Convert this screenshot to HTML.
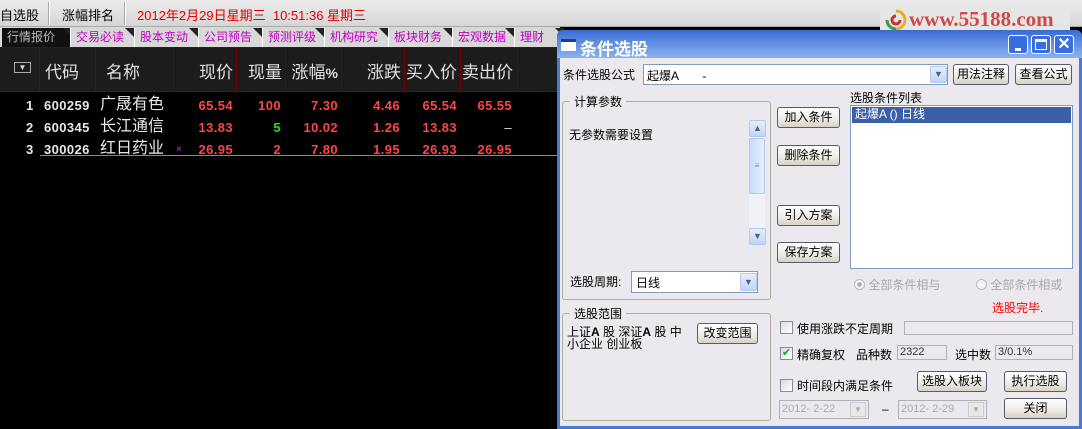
<!DOCTYPE html>
<html><head><meta charset="utf-8"><style>
*{margin:0;padding:0;box-sizing:border-box}
body{width:1082px;height:429px;overflow:hidden;background:#000;position:relative;font-family:"Liberation Sans","Noto Sans CJK SC",sans-serif;font-size:12px}
.a{position:absolute;white-space:nowrap}
.tab{position:absolute;top:28px;height:19px;background:#d8d8d8;color:#c000c0;font-size:12px;line-height:19px;padding-left:5px;border-left:1px solid #fff}
.tab:after{content:"";position:absolute;right:0;top:0;border-top:9px solid #222;border-left:9px solid transparent}
.vl{position:absolute;top:47px;height:44px;width:1px;background:#7a0000}
.h{position:absolute;top:58px;color:#e0e0e0;font-size:17px}
.r{color:#ff4444;font-weight:bold;font-size:13px;letter-spacing:0.4px}
.w{color:#e8e8e8;font-weight:bold;font-size:13px;letter-spacing:0.4px}
.btn{position:absolute;height:21px;border:1px solid #5a5a6a;border-radius:3px;background:linear-gradient(#fff,#ecebe6 60%,#d6d0c5);font-size:12px;text-align:center;line-height:19px;color:#000}
.fld{position:absolute;background:#ebe9ed;border:1px solid #b0b0b8;font-size:11px;line-height:13px;padding-left:2px;color:#333}
.cb{position:absolute;width:13px;height:13px;border:1px solid #8a8a99;background:linear-gradient(135deg,#dcdcd6,#fff)}
.dd{position:absolute;width:17px;border:1px solid #b4c8f0;background:linear-gradient(#e6eefc,#c2d4f6);border-radius:2px;color:#4d6185;font-size:9px;text-align:center}
.grp{position:absolute;border:1px solid #b0aca0;border-radius:3px}
.lg{position:absolute;background:#ebe9ed;padding:0 4px;font-size:12px}
</style></head><body>
<div class="a" style="left:0;top:0;width:1082px;height:27px;background:linear-gradient(#ececec,#d6d6d6);border-bottom:1px solid #aaa"></div>
<div class="a" style="left:48px;top:2px;width:2px;height:23px;background:#fff;border-left:1px solid #aaa"></div>
<div class="a" style="left:124px;top:2px;width:2px;height:23px;background:#fff;border-left:1px solid #aaa"></div>
<div class="a" style="left:0;top:5px;font-size:13px;color:#000">自选股</div>
<div class="a" style="left:62px;top:5px;font-size:13px;color:#000">涨幅排名</div>
<div class="a" style="left:137px;top:5px;font-size:13px;color:#e00000">2012年2月29日星期三&nbsp; 10:51:36 星期三</div>
<div class="a" style="left:880px;top:7px;width:190px;height:27px;background:#e6e6e6"></div>
<svg class="a" style="left:884px;top:8px" width="24" height="26" viewBox="0 0 24 26"><path d="M12 3a9 9 0 1 1-9 9" fill="none" stroke="#e8b020" stroke-width="3"/><path d="M3 12a9 9 0 0 0 9 9" fill="none" stroke="#40a040" stroke-width="3"/><path d="M12 8a4 4 0 1 0 4 4" fill="none" stroke="#d03030" stroke-width="3"/></svg>
<div class="a" style="left:909px;top:7px;font-size:21px;font-weight:bold;color:#d04848;font-family:'Liberation Serif',serif">www.55188.com</div>
<div class="a" style="left:0;top:27px;width:560px;height:20px;background:#d8d8d8"></div>
<div class="tab" style="left:2px;width:70px;background:#111;color:#bbb;border:0">行情报价</div>
<div class="tab" style="left:70px;width:64px">交易必读</div>
<div class="tab" style="left:134px;width:64px">股本变动</div>
<div class="tab" style="left:198px;width:64px">公司预告</div>
<div class="tab" style="left:262px;width:62px">预测评级</div>
<div class="tab" style="left:324px;width:64px">机构研究</div>
<div class="tab" style="left:388px;width:64px">板块财务</div>
<div class="tab" style="left:452px;width:62px">宏观数据</div>
<div class="tab" style="left:514px;width:50px">理财</div>
<div class="a" style="left:0;top:47px;width:560px;height:45px;background:#1c1c1c;border-top:1px solid #7a0000;border-bottom:1px solid #7a0000"></div>
<div class="vl" style="left:39px"></div><div class="vl" style="left:95px"></div><div class="vl" style="left:173px"></div><div class="vl" style="left:236px"></div><div class="vl" style="left:285px"></div><div class="vl" style="left:341px"></div><div class="vl" style="left:404px"></div><div class="vl" style="left:460px"></div><div class="vl" style="left:517px"></div>
<div class="a" style="left:14px;top:62px;width:17px;height:11px;border:1px solid #aaa;color:#ddd;font-size:8px;text-align:center;line-height:9px">▼</div>
<div class="h" style="left:45px">代码</div>
<div class="h" style="left:106px">名称</div>
<div class="h" style="left:199px;width:34px;text-align:right">现价</div>
<div class="h" style="left:248px;width:34px;text-align:right">现量</div>
<div class="h" style="left:290px;width:48px;text-align:right">涨幅<b style="font-size:14px">%</b></div>
<div class="h" style="left:366px;width:35px;text-align:right">涨跌</div>
<div class="h" style="left:400px;width:57px;text-align:right">买入价</div>
<div class="h" style="left:456px;width:57px;text-align:right">卖出价</div>
<div class="a" style="left:0;top:95px;width:560px;font-size:14px;line-height:22px">
<div class="a w" style="left:26px;top:0">1</div><div class="a w" style="left:44px;top:0">600259</div><div class="a" style="left:100px;top:-1px;color:#e8e8e8;font-size:16px">广晟有色</div>
<div class="a r" style="left:180px;top:0;width:53px;text-align:right">65.54</div><div class="a r" style="left:240px;top:0;width:41px;text-align:right">100</div><div class="a r" style="left:290px;top:0;width:48px;text-align:right">7.30</div><div class="a r" style="left:350px;top:0;width:50px;text-align:right">4.46</div><div class="a r" style="left:405px;top:0;width:52px;text-align:right">65.54</div><div class="a r" style="left:460px;top:0;width:52px;text-align:right">65.55</div>
<div class="a w" style="left:26px;top:22px">2</div><div class="a w" style="left:44px;top:22px">600345</div><div class="a" style="left:100px;top:21px;color:#e8e8e8;font-size:16px">长江通信</div>
<div class="a r" style="left:180px;top:22px;width:53px;text-align:right">13.83</div><div class="a r" style="left:240px;top:22px;width:41px;text-align:right;color:#20e020">5</div><div class="a r" style="left:290px;top:22px;width:48px;text-align:right">10.02</div><div class="a r" style="left:350px;top:22px;width:50px;text-align:right">1.26</div><div class="a r" style="left:405px;top:22px;width:52px;text-align:right">13.83</div><div class="a w" style="left:460px;top:22px;width:52px;text-align:right;font-weight:normal">–</div>
<div class="a w" style="left:26px;top:44px">3</div><div class="a w" style="left:44px;top:44px">300026</div><div class="a" style="left:100px;top:43px;color:#e8e8e8;font-size:16px">红日药业</div><div class="a" style="left:176px;top:44px;color:#e020e0;font-size:10px">×</div>
<div class="a r" style="left:180px;top:44px;width:53px;text-align:right">26.95</div><div class="a r" style="left:240px;top:44px;width:41px;text-align:right">2</div><div class="a r" style="left:290px;top:44px;width:48px;text-align:right">7.80</div><div class="a r" style="left:350px;top:44px;width:50px;text-align:right">1.95</div><div class="a r" style="left:405px;top:44px;width:52px;text-align:right">26.93</div><div class="a r" style="left:460px;top:44px;width:52px;text-align:right">26.95</div>
</div>
<div class="a" style="left:40px;top:155px;width:518px;height:1px;background:#a09020"></div>
<div class="a" style="left:557px;top:30px;width:525px;height:399px;background:#4a7ad8;border-radius:6px 6px 0 0"></div>
<div class="a" style="left:557px;top:30px;width:525px;height:28px;background:linear-gradient(#3a6ad0,#5a8ae0 40%,#8ab4ea);border-radius:6px 6px 0 0"></div>
<div class="a" style="left:561px;top:39px;width:15px;height:12px;background:#fff;border-top:3px solid #1c3c98"></div>
<div class="a" style="left:580px;top:35px;color:#fff;font-size:17px;font-weight:bold">条件选股</div>
<div class="a" style="left:1008px;top:35px;width:20px;height:19px;border:1px solid #fff;border-radius:3px;background:#3a6ee0"><div class="a" style="left:6px;top:12px;width:6px;height:3px;background:#fff"></div></div>
<div class="a" style="left:1031px;top:35px;width:20px;height:19px;border:1px solid #fff;border-radius:3px;background:#3a6ee0"><div class="a" style="left:3px;top:3px;width:12px;height:11px;border:1px solid #fff;border-top:3px solid #fff"></div></div>
<div class="a" style="left:1054px;top:35px;width:20px;height:19px;border:1px solid #fff;border-radius:3px;background:#3a6ee0;color:#fff;font-size:16px;text-align:center;line-height:17px;font-weight:bold">✕</div>
<div class="a" style="left:560px;top:58px;width:519px;height:368px;background:#ebe9ed"></div>
<div class="a" style="left:563px;top:66px">条件选股公式</div>
<div class="a" style="left:643px;top:64px;width:305px;height:21px;background:#fff;border:1px solid #7f9db9;padding:2px 3px">起爆A&nbsp;&nbsp;&nbsp;&nbsp;&nbsp;&nbsp;&nbsp;-</div>
<div class="dd" style="left:930px;top:66px;height:17px;line-height:15px">▼</div>
<div class="btn" style="left:953px;top:64px;width:56px">用法注释</div>
<div class="btn" style="left:1015px;top:64px;width:57px">查看公式</div>
<div class="grp" style="left:562px;top:101px;width:209px;height:199px"></div>
<div class="lg" style="left:570px;top:93px">计算参数</div>
<div class="a" style="left:569px;top:126px">无参数需要设置</div>
<div class="a" style="left:749px;top:120px;width:16px;height:125px;background:#f0f2fa"></div>
<div class="dd" style="left:749px;top:120px;height:17px;line-height:15px">▲</div>
<div class="a" style="left:749px;top:138px;width:16px;height:56px;border:1px solid #b4c8f0;border-radius:2px;background:linear-gradient(90deg,#cadcfc,#e6eefc);text-align:center;font-size:8px;line-height:54px;color:#888">≡</div>
<div class="dd" style="left:749px;top:228px;height:17px;line-height:15px">▼</div>
<div class="a" style="left:570px;top:273px">选股周期:</div>
<div class="a" style="left:631px;top:271px;width:127px;height:22px;background:#fff;border:1px solid #7f9db9;padding:2px 4px">日线</div>
<div class="dd" style="left:740px;top:273px;height:18px;line-height:16px">▼</div>
<div class="btn" style="left:777px;top:107px;width:63px">加入条件</div>
<div class="btn" style="left:777px;top:145px;width:63px">删除条件</div>
<div class="btn" style="left:777px;top:205px;width:63px">引入方案</div>
<div class="btn" style="left:777px;top:242px;width:63px">保存方案</div>
<div class="a" style="left:850px;top:89px">选股条件列表</div>
<div class="a" style="left:850px;top:105px;width:223px;height:164px;background:#fff;border:1px solid #7f9db9"></div>
<div class="a" style="left:852px;top:107px;width:219px;height:16px;background:#3a5ea8;color:#fff;padding-left:3px;line-height:15px">起爆A () 日线</div>
<div class="a" style="left:854px;top:276px;color:#a8a8a8"><span style="display:inline-block;width:11px;height:11px;border:1px solid #bbb;border-radius:50%;vertical-align:-1px;background:radial-gradient(#aaa 30%,#f4f4f4 40%)"></span> 全部条件相与</div>
<div class="a" style="left:976px;top:276px;color:#a8a8a8"><span style="display:inline-block;width:11px;height:11px;border:1px solid #bbb;border-radius:50%;vertical-align:-1px;background:#f4f4f4"></span> 全部条件相或</div>
<div class="a" style="left:992px;top:299px;color:#f00">选股完毕.</div>
<div class="grp" style="left:562px;top:313px;width:209px;height:108px"></div>
<div class="lg" style="left:570px;top:305px">选股范围</div>
<div class="a" style="left:567px;top:326px;line-height:12px">上证<b>A</b> 股 深证<b>A</b> 股 中<br>小企业 创业板</div>
<div class="btn" style="left:697px;top:323px;width:61px">改变范围</div>
<div class="cb" style="left:780px;top:321px"></div>
<div class="a" style="left:797px;top:320px">使用涨跌不定周期</div>
<div class="fld" style="left:904px;top:321px;width:169px;height:14px"></div>
<div class="cb" style="left:780px;top:347px;color:#21a121;font-size:11px;line-height:11px;text-align:center">✔</div>
<div class="a" style="left:797px;top:346px">精确复权</div>
<div class="a" style="left:856px;top:346px">品种数</div>
<div class="fld" style="left:897px;top:345px;width:50px;height:15px">2322</div>
<div class="a" style="left:955px;top:346px">选中数</div>
<div class="fld" style="left:995px;top:345px;width:78px;height:15px">3/0.1%</div>
<div class="cb" style="left:780px;top:379px"></div>
<div class="a" style="left:797px;top:377px">时间段内满足条件</div>
<div class="btn" style="left:917px;top:371px;width:70px">选股入板块</div>
<div class="btn" style="left:1004px;top:371px;width:63px">执行选股</div>
<div class="fld" style="left:779px;top:400px;width:90px;height:19px;line-height:17px;color:#aaa">2012- 2-22</div>
<div class="a" style="left:850px;top:402px;width:16px;height:15px;border:1px solid #ccc;background:#e8e8e8;color:#aaa;font-size:8px;text-align:center;line-height:13px">▼</div>
<div class="a" style="left:882px;top:402px">–</div>
<div class="fld" style="left:898px;top:400px;width:89px;height:19px;line-height:17px;color:#aaa">2012- 2-29</div>
<div class="a" style="left:968px;top:402px;width:16px;height:15px;border:1px solid #ccc;background:#e8e8e8;color:#aaa;font-size:8px;text-align:center;line-height:13px">▼</div>
<div class="btn" style="left:1004px;top:398px;width:63px">关闭</div>
</body></html>
